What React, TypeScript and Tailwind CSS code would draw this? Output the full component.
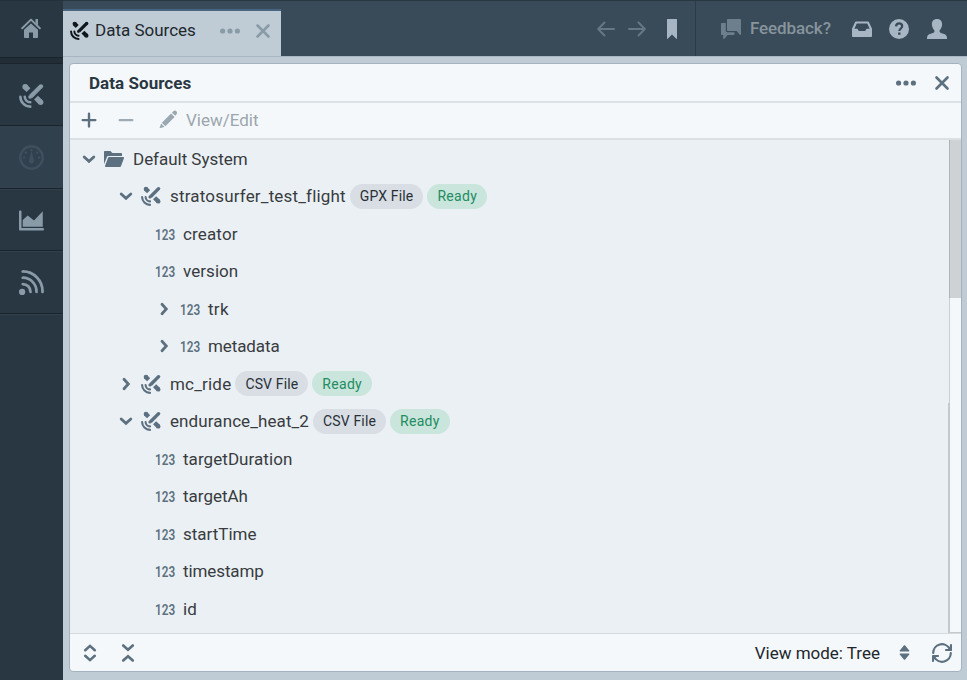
import React from "react";

type IconProps = { size?: number; className?: string; children: React.ReactNode };
function Icon({ size = 20, className = "", children }: IconProps) {
  return (
    <svg width={size} height={size} viewBox="0 0 20 20" fill="currentColor" className={"block shrink-0 " + className}>
      {children}
    </svg>
  );
}
type P = { size?: number; className?: string };

const line = { fill: "none", stroke: "currentColor", strokeLinecap: "round", strokeLinejoin: "round" } as const;

const Home = (p: P) => (
  <Icon {...p}>
    <path d="M10 5.400l-7 6.400V19c0 .55.45 1 1 1h4v-5.500h4V20h4c.55 0 1-.45 1-1v-7.200z" />
    <path {...line} strokeWidth="2" d="M1.200 10.200L10 1.600l8.800 8.600" />
    <path d="M14.500 1H17v6.500l-2.500-2.400z" />
  </Icon>
);
const Satellite = (p: P) => (
  <Icon {...p}>
    <g fill="none" stroke="currentColor">
      <path strokeWidth="4.400" d="M4.500 2.600L7.600 5.700" />
      <path strokeWidth="4.400" d="M13.600 11.700l3.700 3.700" />
      <path strokeWidth="3.400" d="M17.600 2.600L9.500 10.700" />
      <path strokeWidth="2.100" strokeLinecap="round" d="M1.100 11A8 8 0 0 0 9 18.900" />
      <path strokeWidth="2.100" strokeLinecap="round" d="M4.600 11A4.600 4.600 0 0 0 9 15.400" />
    </g>
    <circle cx="4.900" cy="3" r="2.200" />
    <circle cx="17.300" cy="15.400" r="2.200" />
    <circle cx="17.600" cy="2.600" r="1.700" />
    <circle cx="8.900" cy="11.100" r="1.500" />
  </Icon>
);
const Dashboard = (p: P) => (
  <Icon {...p}>
    <circle cx="10" cy="10" r="9" fill="none" stroke="currentColor" strokeWidth="2" />
    <path d="M10 4.500l2 7.700a2.100 2.100 0 1 1-4 0z" />
    <circle cx="4" cy="10" r="1" /><circle cx="16" cy="10" r="1" />
    <circle cx="5.500" cy="6" r="1" /><circle cx="14.500" cy="6" r="1" /><circle cx="10" cy="4" r="1" />
  </Icon>
);
const AreaChart = (p: P) => (
  <Icon {...p}>
    <path d="M0 3c0-.55.45-1 1-1s1 .45 1 1v13h17c.55 0 1 .45 1 1s-.45 1-1 1H1c-.55 0-1-.45-1-1z" />
    <path d="M3 15V9.500L7 6l5 4 7-7.500V15z" />
  </Icon>
);
const Feed = (p: P) => (
  <Icon {...p}>
    <circle cx="2.500" cy="17.500" r="2.500" />
    <g {...line} strokeWidth="2.200">
      <path d="M3 1.200A15.800 15.800 0 0 1 18.800 17.500" />
      <path d="M3 6.200A11 11 0 0 1 14 17.500" />
      <path d="M3 11.200A6.200 6.200 0 0 1 9.200 17.500" />
    </g>
  </Icon>
);
const Cross = (p: P) => (
  <Icon {...p}>
    <path {...line} strokeWidth="2.400" d="M5 5l10 10M15 5L5 15" />
  </Icon>
);
const More = (p: P) => (
  <Icon {...p}>
    <circle cx="2.600" cy="10" r="2.600" /><circle cx="10" cy="10" r="2.600" /><circle cx="17.400" cy="10" r="2.600" />
  </Icon>
);
const Down = (p: P) => (
  <Icon {...p}><path {...line} strokeWidth="2.800" strokeLinejoin="miter" d="M5.200 8L10 12.300 14.800 8" /></Icon>
);
const Right = (p: P) => (
  <Icon {...p}><path {...line} strokeWidth="2.800" strokeLinejoin="miter" d="M8 5.200L12.300 10 8 14.800" /></Icon>
);
const Folder = (p: P) => (
  <Icon {...p}>
    <path d="M20 9c0-.55-.45-1-1-1H5c-.43 0-.79.27-.93.65h-.01l-3 8h.01c-.04.11-.07.23-.07.35 0 .55.45 1 1 1h14c.43 0 .79-.27.93-.65h.01l3-8h-.01c.04-.11.07-.23.07-.35zM3.070 7.630C3.220 7.260 3.580 7 4 7h14V5c0-.55-.45-1-1-1H8.410l-1.700-1.710A.997.997 0 006 2H1c-.55 0-1 .45-1 1v12.310l3.070-7.680z" />
  </Icon>
);
const Plus = (p: P) => (
  <Icon {...p}><path {...line} strokeWidth="2.400" d="M10 3.800v12.600M3.700 10.100h12.600" /></Icon>
);
const Minus = (p: P) => (
  <Icon {...p}><path {...line} strokeWidth="2.400" d="M3.700 10.100h12.600" /></Icon>
);
const Pencil = (p: P) => (
  <Icon {...p}>
    <path d="M3 13.300L12.700 3.700l3.700 3.700L6.700 17zM2.300 14.300l3.500 3.500L1.300 19c-.4.100-.7-.2-.6-.6zM13.600 2.800l1.500-1.500c1-1 2.400-.8 3.200.1.900.8 1 2.200.1 3.200l-1.200 1.500z" />
  </Icon>
);
const ArrowLeft = (p: P) => (
  <Icon {...p}><path {...line} strokeWidth="2" d="M18 10H2.500M8.500 3.500L2.200 10l6.300 6.500" /></Icon>
);
const ArrowRight = (p: P) => (
  <Icon {...p}><path {...line} strokeWidth="2" d="M2 10h15.500M11.500 3.500l6.300 6.500-6.300 6.500" /></Icon>
);
const Bookmark = (p: P) => (
  <Icon {...p}><path d="M5.500 0h9c.3 0 .5.200.5.500v19c0 .5-.4.600-.7.300L10 15.500l-4.300 4.300c-.3.300-.7.200-.7-.3V.5c0-.3.200-.5.500-.5z" /></Icon>
);
const Chat = (p: P) => (
  <Icon {...p}>
    <path d="M7 0h12c.55 0 1 .45 1 1v14c0 .9-.6 1.300-1.200.7L15.600 12H7c-.55 0-1-.45-1-1V1c0-.55.45-1 1-1z" />
    <path d="M1 4h3.800v7.500c0 1 .7 1.700 1.700 1.700h7v1.800c0 .55-.45 1-1 1H6.600l-3.200 3.700c-.6.600-1.200.2-1.200-.6V16H1c-.55 0-1-.45-1-1V5c0-.55.45-1 1-1z" />
  </Icon>
);
const Inbox = (p: P) => (
  <Icon {...p}>
    <path fillRule="evenodd" d="M4 2.500h12c.4 0 .8.200.9.600l3 6.500c.1.200.1.300.1.500V17c0 .55-.45 1-1 1H1c-.55 0-1-.45-1-1v-6.900c0-.2 0-.3.100-.5l3-6.500c.1-.4.500-.6.900-.6zm.7 2L2.400 9.700H5c.4 0 .8.200.9.600l.8 1.700h6.600l.8-1.700c.1-.4.500-.6.900-.6h2.600l-2.300-5.200z" />
  </Icon>
);
const Help = (p: P) => (
  <Icon {...p}>
    <circle cx="10" cy="10" r="10" />
    <path d="M7 7.300C7.200 5.200 8.500 4.300 10.200 4.300c1.900 0 3 1.100 3 2.600 0 2.400-2.800 2.700-2.900 5.100" fill="none" stroke="#394b59" strokeWidth="2.200" />
    <path d="M9.100 13.500h2.400v2.300H9.100z" fill="#394b59" />
  </Icon>
);
const User = (p: P) => (
  <Icon {...p}>
    <path d="M10 0c3.200 0 5.300 2.200 5.100 5.400-.1 2.600-1.300 4.300-2.400 5.800-.4.700-.1 2.200.8 2.600 2.500 1.200 5.200 1.300 6.100 3.200.3.700.4 1.800.4 3H0c0-1.200.1-2.300.4-3 .9-1.900 3.600-2 6.100-3.200.9-.4 1.200-1.900.8-2.600C6.200 9.700 5 8 4.900 5.400 4.700 2.200 6.800 0 10 0z" />
  </Icon>
);
const ExpandAll = (p: P) => (
  <Icon {...p}><path {...line} strokeWidth="2.600" strokeLinejoin="miter" d="M5.200 7.200L10 2.900l4.800 4.300M5.200 12.800l4.800 4.300 4.800-4.300" /></Icon>
);
const CollapseAll = (p: P) => (
  <Icon {...p}><path {...line} strokeWidth="2.600" strokeLinejoin="miter" d="M5.200 2.500L10 6.800l4.800-4.300M5.200 17.500l4.800-4.300 4.800 4.300" /></Icon>
);
const DoubleCaret = (p: P) => (
  <Icon {...p}>
    <path d="M5 7.800l4.300-5.100c.4-.4 1-.4 1.400 0L15 7.800c.3.500.1 1.200-.7 1.200H5.700C4.900 9 4.700 8.300 5 7.800zM5 12.200l4.300 5.100c.4.400 1 .4 1.400 0l4.300-5.100c.3-.5.100-1.200-.7-1.200H5.700c-.8 0-1 .7-.7 1.200z" />
  </Icon>
);
const Refresh = (p: P) => (
  <Icon {...p}>
    <path {...line} strokeWidth="2.200" d="M1.200 10A8.800 8.800 0 0 1 17.600 5.600M19 2V7h-5M18.800 10A8.800 8.800 0 0 1 2.400 14.400M1 18v-5h5" />
    <path d="M19 3v4h-4zM1 17v-4h4z" />
  </Icon>
);

type Item = {
  label: string;
  pad: string;
  kind: "folder" | "source" | "number";
  open?: boolean;
  tracking?: string;
  file?: string;
};

const items: Item[] = [
  { label: "Default System", pad: "pl-[9px]", kind: "folder", open: true, tracking: "tracking-[-0.03px]" },
  { label: "stratosurfer_test_flight", pad: "pl-[46px]", kind: "source", open: true, tracking: "tracking-[0.18px]", file: "GPX File" },
  { label: "creator", pad: "pl-[85px]", kind: "number", tracking: "tracking-[0.15px]" },
  { label: "version", pad: "pl-[85px]", kind: "number" },
  { label: "trk", pad: "pl-[84px]", kind: "number", open: false, tracking: "tracking-[0.3px]" },
  { label: "metadata", pad: "pl-[84px]", kind: "number", open: false, tracking: "tracking-[-0.1px]" },
  { label: "mc_ride", pad: "pl-[46px]", kind: "source", open: false, tracking: "tracking-[0.2px]", file: "CSV File" },
  { label: "endurance_heat_2", pad: "pl-[46px]", kind: "source", open: true, tracking: "tracking-[0.1px]", file: "CSV File" },
  { label: "targetDuration", pad: "pl-[85px]", kind: "number" },
  { label: "targetAh", pad: "pl-[85px]", kind: "number", tracking: "tracking-normal" },
  { label: "startTime", pad: "pl-[85px]", kind: "number", tracking: "tracking-normal" },
  { label: "timestamp", pad: "pl-[85px]", kind: "number", tracking: "tracking-[-0.1px]" },
  { label: "id", pad: "pl-[85px]", kind: "number", tracking: "tracking-normal" },
];

function Row({ item }: { item: Item }) {
  const numeric = item.kind === "number";
  return (
    <div className={"flex h-[37.5px] shrink-0 items-center text-[#5c7080] " + item.pad}>
      {item.open === true && <Down />}
      {item.open === false && <Right />}
      <span className={numeric ? (item.open === false ? "ml-[6px] flex w-7" : "flex w-7") : "ml-[5px] mr-[9px]"}>
        {item.kind === "folder" && <Folder />}
        {item.kind === "source" && <Satellite />}
        {numeric && <span className="origin-left scale-x-[0.84] pt-[1.5px] text-[14px] font-semibold tracking-normal">123</span>}
      </span>
      <span className={"pt-px text-[17px] text-[#383c40] " + (item.tracking ?? "tracking-[0.06px]")}>{item.label}</span>
      {item.file && (
        <>
          <span className="ml-1 flex h-[25px] items-center rounded-full bg-[#d8dee4] px-[10px] text-[14px] tracking-[0.15px] text-[#293037]">{item.file}</span>
          <span className="ml-1 flex h-[25px] items-center rounded-full bg-[#c9e5dc] px-[10px] text-[14px] tracking-[0.3px] text-[#238c61]">Ready</span>
        </>
      )}
    </div>
  );
}

export default function App() {
  return (
    <div className="flex h-[680px] w-[967px] overflow-hidden bg-[#bfccd6] font-['Roboto',sans-serif] leading-none">
      <nav className="flex w-[63px] shrink-0 flex-col bg-[#293742] text-[#8a9ba8]">
        <div className="flex h-[57px] items-center justify-center border-t border-[#24303a] pb-[2px] pr-[2px]"><Home /></div>
        <div className="h-[7px] border-y border-[#1a242c] bg-[#222e37]" />
        <div className="flex h-[62px] items-center justify-center border-b border-[#1a242c] pt-[2px]"><Satellite size={25} /></div>
        <div className="flex h-[63px] items-center justify-center border-b border-[#1a242c] bg-[#30404d] text-[#3e4f5d]"><Dashboard size={25} /></div>
        <div className="flex h-[62px] items-center justify-center border-b border-t border-b-[#1a242c] border-t-[#30404d]"><AreaChart size={25} /></div>
        <div className="flex h-[63px] items-center justify-center border-b border-t border-b-[#1a242c] border-t-[#30404d]"><Feed size={25} /></div>
        <div className="h-px bg-[#30404d]" />
      </nav>
      <div className="flex min-w-0 grow flex-col">
        <header className="flex h-14 shrink-0 items-end border-t border-[#293742] bg-[#394b59]">
          <div className="flex h-[47px] w-[218px] items-center border-t-2 border-[#486581] bg-[#bfccd6] pb-[6px] pl-[7px] text-[#8a9ba8]">
            <Satellite size={19} className="text-[#10161a]" />
            <span className="ml-[6px] w-[125px] text-[17px] text-[#20272c]">Data Sources</span>
            <More />
            <Cross size={22} className="ml-[12px]" />
          </div>
          <div className="ml-auto flex h-full items-center text-[#a7b6c2]">
            <ArrowLeft className="text-[#667784]" />
            <ArrowRight className="ml-[11px] text-[#667784]" />
            <Bookmark className="ml-[15px]" />
            <div className="ml-[13px] h-full w-px bg-[#2d3c48]" />
            <Chat className="ml-[25px] text-[#6d7f8c]" />
            <span className="ml-[9px] w-[102px] text-[17px] font-medium tracking-[-0.1px] text-[#87949c]">Feedback?</span>
            <Inbox />
            <Help className="ml-[17px]" />
            <User className="ml-[18px] mr-[20px]" />
          </div>
        </header>
        <div className="h-px shrink-0 bg-[#a7b6c2]" />
        <main className="ml-[6px] mr-[5px] mt-[6px] flex h-[609px] flex-col overflow-hidden rounded-[4px] border border-[#a3b2be] bg-[#f5f8fa] text-[#5c7080]">
          <div className="flex h-[39px] shrink-0 items-center border-b-2 border-[#dbe1e5] pl-[19px] pr-[8px] pt-px">
            <h1 className="grow text-[17px] font-bold tracking-[0.05px] text-[#293742]">Data Sources</h1>
            <More />
            <Cross size={22} className="ml-[15px]" />
          </div>
          <div className="flex h-[37px] shrink-0 items-center border-b-2 border-[#dbe0e3] pb-[2px] pl-[9px]">
            <Plus />
            <Minus className="ml-[17px] text-[#9eaab4]" />
            <Pencil size={19} className="ml-[23px] text-[#9aa8b2]" />
            <span className="ml-[8px] pt-px text-[17px] text-[#9ba6ae]">View/Edit</span>
          </div>
          <div className="flex min-h-0 grow bg-[#ebf0f4]">
            <div className="flex grow flex-col overflow-hidden">
              {items.map((item) => <Row key={item.label} item={item} />)}
            </div>
            <div className="flex w-[12px] shrink-0 flex-col border-l border-[#cbcfd2] bg-[#f5f8fa]">
              <div className="-ml-px h-[158px] border-l border-[#afb3b6] bg-[#ced2d5]" />
              <div className="-ml-[2px] mt-[105px] grow border-b border-l-2 border-[#c5c9cc]" />
            </div>
          </div>
          <footer className="flex h-[38px] shrink-0 items-center border-t border-[#d5dade] pl-[10px] pr-[9px]">
            <ExpandAll />
            <CollapseAll className="ml-[18px]" />
            <span className="ml-auto pt-[2px] text-[17px] text-[#20272c]">View mode: Tree</span>
            <DoubleCaret size={19} className="ml-[15px]" />
            <Refresh className="ml-[18px]" />
          </footer>
        </main>
      </div>
    </div>
  );
}
